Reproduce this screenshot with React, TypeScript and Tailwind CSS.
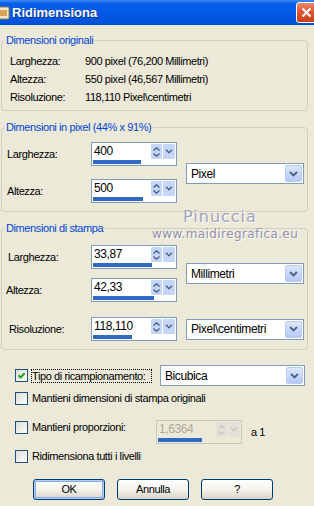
import React from "react";

const Chevron = ({ w = 9 }: { w?: number }) => (
  <svg width={w} height={6} viewBox="0 0 9 6">
    <path d="M1 1L4.5 4.5L8 1" fill="none" stroke="#4D6185" strokeWidth="1.8" />
  </svg>
);

const Combo = ({ value, className }: { value: string; className: string }) => (
  <div className={`flex h-[21px] items-center border border-[#7F9DB9] bg-white ${className}`}>
    <span className="flex-1 pl-[4px] text-[12px] leading-none">{value}</span>
    <div className="m-[1px] flex w-[17px] items-center justify-center self-stretch rounded-[2px] border border-[#B9CAF3] bg-gradient-to-b from-[#DCE6FD] to-[#B3C9F5]">
      <Chevron />
    </div>
  </div>
);

const Spin = ({
  value,
  bar,
  disabled,
}: {
  value: string;
  bar: string;
  disabled?: boolean;
}) => (
  <div
    className={`flex h-[24px] w-[86px] shrink-0 flex-col border ${
      disabled ? "border-[#C9C7BA] bg-[#ECE9D8]" : "border-[#7F9DB9] bg-white"
    }`}
  >
    <div className="flex min-h-0 flex-1">
      <span
        className={`flex-1 pl-[2px] pt-[1px] text-[12px] leading-[15px] ${
          disabled ? "text-[#ACA899]" : "text-black"
        }`}
      >
        {value}
      </span>
      <div
        className={`my-[1px] flex w-[11px] flex-col items-center justify-center gap-[2px] rounded-[1px] ${
          disabled ? "bg-[#E4E2D8]" : "bg-[#C6D5FA]"
        }`}
      >
        <svg width="7" height="4" viewBox="0 0 7 4">
          <path d="M0.5 3.5L3.5 0.8L6.5 3.5" fill="none" stroke={disabled ? "#C9C7BA" : "#4D6185"} strokeWidth="1.4" />
        </svg>
        <svg width="7" height="4" viewBox="0 0 7 4">
          <path d="M0.5 0.5L3.5 3.2L6.5 0.5" fill="none" stroke={disabled ? "#C9C7BA" : "#4D6185"} strokeWidth="1.4" />
        </svg>
      </div>
      <div
        className={`m-[1px] flex w-[12px] items-center justify-center rounded-[1px] ${
          disabled ? "bg-[#E4E2D8]" : "bg-[#C6D5FA]"
        }`}
      >
        <svg width="8" height="5" viewBox="0 0 9 6">
          <path d="M1 1L4.5 4.5L8 1" fill="none" stroke={disabled ? "#C9C7BA" : "#4D6185"} strokeWidth="1.8" />
        </svg>
      </div>
    </div>
    <div className={`mb-[1px] ml-[1px] h-[4px] bg-[#316AC5] ${bar}`} />
  </div>
);

const Check = ({ checked }: { checked?: boolean }) => (
  <div className="flex h-[13px] w-[13px] shrink-0 items-center justify-center border border-[#1C5180] bg-gradient-to-br from-[#DCDCD7] to-white">
    {checked && (
      <svg width="9" height="9" viewBox="0 0 9 9">
        <path d="M1.5 4.3L3.6 6.5L7.6 2.2" fill="none" stroke="#21A121" strokeWidth="2" />
      </svg>
    )}
  </div>
);

const Btn = ({ children, def }: { children: React.ReactNode; def?: boolean }) => (
  <button
    type="button"
    className={`flex h-[21px] w-[72px] items-center justify-center rounded-[3px] border border-[#003C74] bg-gradient-to-b from-white via-[#F4F3EE] to-[#D8D2C6] text-[11px] ${
      def ? "shadow-[inset_0_0_0_1px_#B4CDF3,inset_0_0_0_2px_#89ADE4]" : ""
    }`}
  >
    {children}
  </button>
);

const legend = "ml-[2px] px-[2px] leading-[13px] text-[#0046D5]";
const group = "ml-[1px] w-[307px] rounded-[4px] border border-[#D0D0BF]";

export default function App() {
  return (
    <div className="relative h-[506px] w-[314px] overflow-hidden bg-[#ECE9D8] font-['Liberation_Sans',Arial,sans-serif] text-[11px] tracking-[-0.4px] text-black">
      {/* title bar */}
      <div className="flex h-[25px] items-center bg-[linear-gradient(180deg,#3C8CF5_0%,#0A5EEA_14%,#0058E6_60%,#0050D6_100%)]">
        <svg width="10" height="14" viewBox="0 0 10 14" className="shrink-0">
          <rect x="-3" y="1" width="12" height="12" rx="1" fill="#F3E7C8" stroke="#9C7A4A" />
          <rect x="-1" y="4" width="8" height="6" fill="#D9A45A" />
        </svg>
        <span className="ml-[2px] text-[13px] font-bold tracking-normal text-white [text-shadow:1px_1px_0_#0A2F8C]">
          Ridimensiona
        </span>
        <div className="ml-auto mr-[-3px] flex h-[21px] w-[21px] items-center justify-center rounded-[3px] border border-white bg-gradient-to-b from-[#E9876A] via-[#E0522C] to-[#C9401E]">
          <svg width="11" height="11" viewBox="0 0 11 11">
            <path d="M1.5 1.5L9.5 9.5M9.5 1.5L1.5 9.5" stroke="white" strokeWidth="2.2" />
          </svg>
        </div>
      </div>

      {/* Dimensioni originali */}
      <fieldset className={`${group} mt-[9px] h-[77px]`}>
        <legend className={legend}>Dimensioni originali</legend>
        <div className="grid grid-cols-[75px_1fr] pl-[8px] pt-[5px]">
          <span className="flex h-[18px] items-center">Larghezza:</span>
          <span className="flex h-[18px] items-center">900 pixel (76,200 Millimetri)</span>
          <span className="flex h-[18px] items-center">Altezza:</span>
          <span className="flex h-[18px] items-center">550 pixel (46,567 Millimetri)</span>
          <span className="flex h-[18px] items-center">Risoluzione:</span>
          <span className="flex h-[18px] items-center">118,110 Pixel\centimetri</span>
        </div>
      </fieldset>

      {/* Dimensioni in pixel */}
      <fieldset className={`${group} mt-[10px] h-[91px]`}>
        <legend className={legend}>Dimensioni in pixel (44% x 91%)</legend>
        <div className="flex items-center pt-[8px]">
          <div className="flex flex-col gap-[13px]">
            <div className="flex items-center">
              <span className="ml-[5px] w-[84px]">Larghezza:</span>
              <Spin value="400" bar="w-[48px]" />
            </div>
            <div className="flex items-center">
              <span className="ml-[5px] w-[84px]">Altezza:</span>
              <Spin value="500" bar="w-[50px]" />
            </div>
          </div>
          <Combo value="Pixel" className="ml-[9px] mt-[2px] w-[118px]" />
        </div>
      </fieldset>

      {/* Dimensioni di stampa */}
      <fieldset className={`${group} mt-[10px] h-[128px]`}>
        <legend className={legend}>Dimensioni di stampa</legend>
        <div className="flex flex-col pt-[10px]">
          <div className="flex items-center">
            <div className="flex flex-col gap-[9px]">
              <div className="flex items-center">
                <span className="ml-[6px] w-[83px]">Larghezza:</span>
                <Spin value="33,87" bar="w-[59px]" />
              </div>
              <div className="flex items-center">
                <span className="ml-[4px] w-[85px]">Altezza:</span>
                <Spin value="42,33" bar="w-[61px]" />
              </div>
            </div>
            <Combo value="Millimetri" className="ml-[9px] w-[118px]" />
          </div>
          <div className="mt-[15px] flex items-center">
            <span className="ml-[7px] w-[82px]">Risoluzione:</span>
            <Spin value="118,110" bar="w-[39px]" />
            <Combo value="Pixel\centimetri" className="ml-[9px] w-[118px]" />
          </div>
        </div>
      </fieldset>

      {/* options */}
      <div className="flex flex-col">
        <div className="mt-[16px] flex h-[19px] items-center">
          <div className="ml-[15px]">
            <Check checked />
          </div>
          <span className="ml-[3px] w-[121px] border border-dotted border-black leading-[12px]">
            Tipo di ricampionamento:
          </span>
          <Combo value="Bicubica" className="ml-[8px] w-[145px]" />
        </div>
        <div className="mt-[3px] flex h-[20px] items-center">
          <div className="ml-[15px]">
            <Check />
          </div>
          <span className="ml-[4px]">Mantieni dimensioni di stampa originali</span>
        </div>
        <div className="mt-[12px] flex h-[24px] items-start">
          <div className="ml-[15px] mt-[1px]">
            <Check />
          </div>
          <span className="ml-[4px] mt-[1px] w-[124px] leading-[13px]">Mantieni proporzioni:</span>
          <Spin value="1,6364" bar="w-[44px]" disabled />
          <span className="ml-[9px] self-center">a 1</span>
        </div>
        <div className="mt-[5px] flex h-[14px] items-center">
          <div className="ml-[15px]">
            <Check />
          </div>
          <span className="ml-[4px]">Ridimensiona tutti i livelli</span>
        </div>
        <div className="mt-[16px] flex gap-[12px] pl-[33px]">
          <Btn def>OK</Btn>
          <Btn>Annulla</Btn>
          <Btn>?</Btn>
        </div>
      </div>

      {/* watermark */}
      <div className="pointer-events-none absolute left-[183px] top-[205px] font-['DejaVu_Sans',sans-serif] text-[16px] tracking-[1px] text-[#A2A2BC] [text-shadow:1px_1px_0_#FFFFFF]">
        Pinuccia
      </div>
      <div className="pointer-events-none absolute left-[152px] top-[225px] font-['DejaVu_Sans',sans-serif] text-[12px] tracking-[0.4px] text-[#9090A8] [text-shadow:1px_1px_0_#FFFFFF]">
        www.maidiregrafica.eu
      </div>
    </div>
  );
}
